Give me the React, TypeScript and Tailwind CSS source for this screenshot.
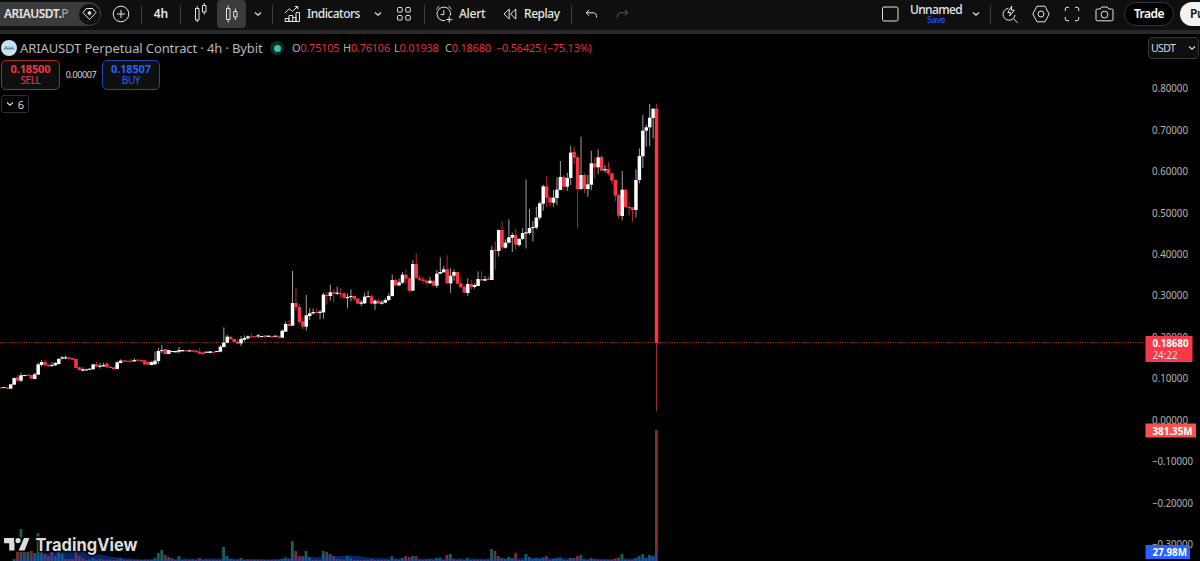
import React from "react";

type Segment = { x: number; y: number; data: string };

const STEP = 3.435;

// Each candle: direction, body top, body bottom, wick top, wick bottom (thirds of a pixel from the segment origin)
const segments: Segment[] = [
  {
    x: 0.4,
    y: 340,
    data: "R142,145 W141,144 R142,146 W133,146 W114,134 R112,122,104,124 W106,122,98,126 W105,108 R104,108 R105,116 W103,117,98,118 W73,104,68,104 W66,75,60,80 R66,76,60,80 R74,79 W75,78,66,80 W69,76,66,78 W57,72,54,74 W52,56,48,58 W52,55,46,58 R52,56,50,60 R54,59 R57,84 R82,90,80,92 W88,92,82,94 W88,91 W86,89 W73,88 R73,80,65,80 W77,80,68,86 W75,79,68,80 R70,82,68,84 R80,84 R82,88 W67,87,64,88 W62,69,58,70 R61,65 R62,64 R62,65,58,68 W60,64,54,66 R59,62 R60,62,58,66 R61,73 R66,74 W66,75,64,76 W62,73,35,75 W33,63,24,72 W30,33,15,40 R27,42 W30,42 W33,36 W33,37 W30,35,20,40 W30,34 R31,34 W31,34 R31,35 R32,37 R35,41,24,44 R37,42,34,47 W35,38",
  },
  {
    x: 210.1,
    y: 260,
    data: "W274,279 R275,278 W273,275 W260,275,255,277 W248,261,202,262 W230,248,224,250 R230,238 R237,246 R245,251,238,252 W237,250,228,258 W234,239,226,244 W229,235,226,238 R229,231,220,232 R228,231 W226,229,222,234 W228,230 R226,232 W227,231 R228,232 W227,230 R229,232,226,236 W212,233,208,234 W192,215,184,216 R192,198,180,198 W129,197,32,198 R129,142,84,152 R141,186,132,192 R184,200,170,208 W166,200,105,212 W160,168,145,180 W156,160,146,164 R156,159,146,160 W155,159,150,178 W104,157,98,176 R104,108,96,134 W97,108,74,122 R97,101,88,126 W98,101,80,104 R100,102,84,115 R100,113,96,118 W111,114,100,144 W108,111,88,124 R108,117,106,122 R116,131,114,132 W127,131,120,138 W110,130,98,132 W108,111,92,112 R109,131,105,133 W122,131,118,150 R122,131,116,131",
  },
  {
    x: 381.9,
    y: 210,
    data: "W277,281,270,284 W270,278,264,280 W258,270,250,274 W210,258,194,260 R210,226,206,228 W217,226,206,228 W194,218,186,222 R194,206,178,222 R205,242,202,248 W162,242,150,243 R162,204,130,206 R204,209,196,214 R208,213,200,222 R212,218,208,224 W212,220,200,220 R212,227,212,230 W191,227,180,234 W186,191,142,192 W178,187,168,188 R178,220,136,222 W197,220,175,248 W186,197,178,212 R186,221,186,224 R220,232,200,234 R231,248,225,248 W222,249,205,258 R222,231,210,240 W225,231,220,236 W207,228,184,228 R207,211,184,213 W207,212,198,214 R206,210,198,210 W120,210,108,210 R119,123,94,178 W60,123,58,140",
  },
  {
    x: 502,
    y: 90,
    data: "R420,472,393,480 W458,473,448,476 W442,458,388,460 W435,443,428,486 R435,464,415,480 W447,465,444,470 W429,447,415,450 W427,430,268,475 W414,429,357,435 W411,414,393,455 W383,413,350,418 W340,383,335,390 W289,341,284,362 R289,324,258,352 R323,338,320,350 W323,338,300,350 W299,324,262,345 W261,300,213,300 R261,290,255,302 W264,290,248,303 W188,264,168,285 R186,203,170,222 R202,297,195,415 W255,297,140,300 R255,296,250,310 W283,297,255,320 W220,284,182,300 R220,232,202,266 W202,232,178,252 R201,242,196,243 W237,241,225,248 R237,251,215,256 R250,272,248,284 R270,317,270,333 R315,377,312,387 W299,378,243,391 R299,352 R351,353,335,377 R352,360,352,396 W270,360,238,383 W198,270,175,280 W122,199,75,234 W112,122,104,170 W83,112,42,168 W56,84,56,145 R56,759,42,964",
  },
];

const candles = segments.flatMap((s) =>
  s.data.split(" ").map((c, i) => {
    const v = c.slice(1).split(",").map(Number);
    return {
      up: c[0] === "W",
      x: s.x + i * STEP,
      top: s.y + v[0] / 3,
      bottom: s.y + v[1] / 3,
      high: s.y + (v[2] ?? v[0]) / 3,
      low: s.y + (v[3] ?? v[1]) / 3,
    };
  })
);

// Volume bar heights in pixels, keyed by bar index counted from the last candle
const volumes: Record<number, [string, number]> = {};
const addVolumes = (list: string) =>
  list.split(" ").forEach((e) => {
    const [x, h] = e.slice(1).split(",").map(Number);
    volumes[Math.round((656.4 - x) / STEP)] = [e[0], h];
  });
addVolumes(
  "G14,2 R17.5,9 G21,32 R24.5,9 G28,9 R31,10 G34.5,8 G38,28 G41,10 R45,7 R48,5 R51.5,9 G55,5 G58.5,9 G62,7 R65.5,2 R69,2 R72,2 R75.5,9 R79,5 R82,3 G92,3 G99,2 G120,3 G154,3 G157.5,8 G161.5,11 R165,6 G168,4 R171.5,3 G178.5,5 R199,3 G223.5,14 G227,5 R230,2"
);
addVolumes(
  "G240,3 G282,2 G285.5,3.5 R289,2 G292.3,20 R295.7,10 R299,5 R302.5,5 G306,10 G309.5,4 G323,10 R326.7,9 G330,7 R333.5,5 G337,2 R340,2 G347,5 G350,3 R371,2 G391.5,5 R395,2 G402,3 R405.7,5 R409,4 G412.5,5 R416,5 G429,2 G436,3 G440,3.5 R447,6 G450,7 R454,2 G467,3 G491.5,12 R495,10 G498,5 R502,3 G505,2 G508.5,4 G512,3 R515,8 G526,7 G529.5,4 G533,2 G536,3 G539.5,2 G543,3.5 R546,5 G553,2 G557,3 G560.5,3.5 G570.5,3 R574,3 R577.5,5 G580.5,6 G591,3 R595,2 R615,2.5 R618.5,3.5 G621.8,7 G635.8,3 G639.5,5 G643,7 G646,3 G649.5,6 G653,5 R656.4,131"
);
const volumeBars = Array.from({ length: 188 }, (_, i) => {
  const [color, h] = volumes[i] ?? [i % 3 ? "R" : "G", 1 + (i % 2) * 0.4];
  return { x: 656.4 - i * STEP, color, h };
});

const axis = ["0.80000", "0.70000", "0.60000", "0.50000", "0.40000", "0.30000", "0.20000", "0.10000", "0.00000", "−0.10000", "−0.20000", "−0.30000"];

function Chart() {
  return (
    <svg className="block h-[527px] w-[1200px]" viewBox="0 34 1200 527" fontFamily='"Noto Sans", sans-serif' fontSize="11">
      {volumeBars.map((b, i) => (
        <rect key={i} x={b.x - 1.4} y={561 - b.h} width="2.8" height={b.h} fill={b.color === "G" ? "#13635a" : "#842c2b"} />
      ))}
      <path
        d="M14 561L22 558L32 557L42 554L55 552L70 551.5L88 552.5L102 555L118 557.5L140 559.5L175 558.5L230 558.5L270 559.5L310 557L330 556.5L350 555.5L360 556L368 557.7L395 558.5L510 558.5L540 557.5L575 558.5L620 559L645 558L653 557L657 551V561Z"
        fill="#1545c8"
        fillOpacity="0.5"
      />
      <path d="M0 342.5H1145" stroke="#f23645" strokeOpacity="0.75" strokeWidth="1" strokeDasharray="1 1.4" />
      {candles.map((c, i) => (
        <g key={i}>
          <rect x={c.x - 0.5} y={c.high} width="1" height={c.low - c.high} fill={c.up ? "#a0a0a0" : "#b02834"} />
          <rect x={c.x - 1.75} y={c.top} width="3.5" height={Math.max(1.1, c.bottom - c.top)} fill={c.up ? "#ffffff" : "#fb3545"} />
        </g>
      ))}
      {axis.map((t, i) => (
        <text key={t} x="1152" y={92.3 + i * 41.42} fill="#b4b4b8" textLength={t.length === 7 ? 36 : 41} lengthAdjust="spacingAndGlyphs">
          {t}
        </text>
      ))}
      <rect x="1145.5" y="336" width="47" height="26" fill="#f7394a" />
      <g fill="#ffffff">
        <text x="1152.5" y="346.8" fontWeight="700" textLength="36" lengthAdjust="spacingAndGlyphs">0.18680</text>
        <text x="1152.5" y="358.8" fillOpacity="0.85" textLength="25" lengthAdjust="spacingAndGlyphs">24:22</text>
      </g>
      <rect x="1145.5" y="423.5" width="50.5" height="14" fill="#f7524f" />
      <text x="1152.5" y="434.5" fill="#fff" fontWeight="700" textLength="40" lengthAdjust="spacingAndGlyphs">381.35M</text>
      <rect x="1145.5" y="545" width="44.5" height="14" fill="#2962ff" />
      <text x="1152.5" y="556" fill="#fff" fontWeight="700" textLength="34.5" lengthAdjust="spacingAndGlyphs">27.98M</text>
      <g fill="#dcdcdc" stroke="#000" strokeWidth="3" strokeLinejoin="round" paintOrder="stroke">
        <path d="M4 538H14.5V550.5H9.2V543.2H4Z" />
        <path d="M24 538H29.5L24.6 550.5H18.6Z" />
        <circle cx="18" cy="540.6" r="2.6" />
        <text x="35.5" y="550.5" fontFamily='"Inter", sans-serif' fontSize="17.5" fontWeight="700" textLength="102" lengthAdjust="spacingAndGlyphs">TradingView</text>
      </g>
    </svg>
  );
}

function Icon({ w = 18, h = 18, className = "", children }: { w?: number; h?: number; className?: string; children: React.ReactNode }) {
  return (
    <svg width={w} height={h} viewBox={`0 0 ${w} ${h}`} className={`shrink-0 ${className}`} fill="none" stroke="currentColor" strokeWidth="1">
      {children}
    </svg>
  );
}

const Chevron = () => (
  <Icon w={8} h={6}>
    <path d="M1 1.5L4 4.2L7 1.5" strokeWidth="1.1" />
  </Icon>
);

const Divider = () => <div className="h-[19px] w-px shrink-0 bg-[#3c3c3c]" />;

function Slot({ className, children }: { className: string; children: React.ReactNode }) {
  return <div className={`flex h-7 shrink-0 items-center justify-center ${className}`}>{children}</div>;
}

function Toolbar() {
  return (
    <header className="flex h-[34px] items-start overflow-hidden border-b-4 border-[#292929] bg-[#0f0f0f] text-[12px] leading-none font-medium whitespace-nowrap text-[#e6e6e6]">
      <div className="flex h-7 shrink-0 items-center">
        <div className="flex h-6 w-[101px] items-center justify-between rounded-r-full bg-[#3b3b3b] pr-px pl-1">
          <span className="text-[12px] font-semibold tracking-[-0.5px]">
            ARIAUSDT.<span className="font-normal text-[#b0b0b0]">P</span>
          </span>
          <span className="flex size-[21px] items-center justify-center rounded-full bg-[#0f0f0f]">
            <Icon w={15} h={14}>
              <path d="M4.2 1.5H10.8L14 5.6L7.5 12.5L1 5.6Z" />
              <path d="M7.5 3.7L9.7 6L7.5 8.5L5.3 6Z" fill="currentColor" stroke="none" />
            </Icon>
          </span>
        </div>
        <Slot className="w-10">
          <Icon>
            <circle cx="9" cy="9" r="7.8" />
            <path d="M9 5V13M5 9H13" />
          </Icon>
        </Slot>
        <Divider />
        <Slot className="w-[38px] font-semibold">4h</Slot>
        <Divider />
        <Slot className="w-9 pb-[4px] pl-[3px]">
          <Icon w={14} h={20}>
            <path d="M1.5 6.5H5V18H1.5ZM3.2 4V6.5M3.2 18V20M8.5 3.5H12V10H8.5ZM10.2 1V3.5M10.2 10V12.5" />
          </Icon>
        </Slot>
        <div className="flex h-7 w-[29px] shrink-0 items-center justify-center rounded-[4px] bg-[#3b3b3b]">
          <Icon w={14} h={20}>
            <path d="M1.5 4.5H5V15.5H1.5ZM3.2 1.5V4.5M3.2 15.5V18.5M8.7 7.5H12V13H8.7ZM10.4 4.5V7.5M10.4 13V16" />
          </Icon>
        </div>
        <Slot className="w-[26px] pr-[3px]"><Chevron /></Slot>
        <Divider />
        <Slot className="w-[34px] justify-end pr-[6px]">
          <Icon w={17} h={18}>
            <path d="M.8 8.2L5.2 3.8L8.5 6.5L13.5 1.5M10.8 1.5H13.8V4.3" />
            <path d="M1.2 16.5V13.5H5V16.5M5 16.5V10.5H8.7V16.5M8.7 12.5H12V16.5M12 16.5V7.5H15.5V16.5M.8 16.5H15.5" />
          </Icon>
        </Slot>
        <span className="w-[67px] text-[12px] tracking-[-0.52px]">Indicators</span>
        <Chevron />
        <Slot className="w-[42px] pl-[2px]">
          <Icon w={16} h={16}>
            <rect x="1.5" y="1.5" width="4.6" height="4.6" rx="1" />
            <rect x="9.7" y="1.5" width="4.6" height="4.6" rx="1" />
            <rect x="1.5" y="9.5" width="4.6" height="4.6" rx="1" />
            <rect x="9.7" y="9.5" width="4.6" height="4.6" rx="1" />
          </Icon>
        </Slot>
        <Divider />
        <Slot className="w-[34px] pl-[4px]">
          <Icon w={19} h={19}>
            <path d="M15.4 10.5A6.8 6.8 0 1 0 10 15.6M8.8 5.2V9.6H5.6M1.3 4L4.3 1.3M13.5 1.3L16.5 4M14.2 11.5V17.7M11 14.6H17.4" />
          </Icon>
        </Slot>
        <span className="w-[44px] tracking-[-0.25px]">Alert</span>
        <Slot className="w-[21px] justify-start">
          <Icon w={14} h={12}>
            <path d="M6.2 1V11L1 6ZM12.8 1V11L7.6 6Z" />
          </Icon>
        </Slot>
        <span className="w-[47px] tracking-[-0.45px]">Replay</span>
        <Divider />
        <Slot className="w-[38px]">
          <Icon w={13} h={10}>
            <path d="M4 1L1.2 3.8L4 6.6M1.2 3.8H8.3Q11.7 4 11.7 8.5" />
          </Icon>
        </Slot>
        <Slot className="w-6 text-[#606060]">
          <Icon w={13} h={10}>
            <path d="M9 1L11.8 3.8L9 6.6M11.8 3.8H4.7Q1.3 4 1.3 8.5" />
          </Icon>
        </Slot>
      </div>
      <div className="ml-auto flex h-7 w-[319px] shrink-0 items-center">
        <Icon w={18} h={16}>
          <rect x="1.5" y="1" width="15.5" height="14" rx="1.5" />
        </Icon>
        <div className="ml-3 flex w-[50px] flex-col items-center">
          <span className="text-[12px] leading-[12px] tracking-[-0.6px]">Unnamed</span>
          <span className="text-[9px] leading-[8px] font-normal tracking-[-0.4px] text-[#2962ff]">Save</span>
        </div>
        <Slot className="w-[29px]"><Chevron /></Slot>
        <Divider />
        <Slot className="w-[34px] pl-[3px]">
          <Icon w={18} h={19}>
            <path d="M7.4 3.3A6 6 0 1 0 14 10M12.2 13.3L16.5 17.7M10.8 1L6.8 7.5H9.6L8.6 11L13.4 5.2H10.4Z" />
          </Icon>
        </Slot>
        <Slot className="w-[31px]">
          <Icon>
            <path d="M5 1.2H13L17.2 9L13 16.8H5L.8 9Z" />
            <circle cx="9" cy="9" r="3" />
          </Icon>
        </Slot>
        <Slot className="w-8">
          <Icon w={16} h={16}>
            <path d="M1.3 5V3Q1.3 1.3 3 1.3H5M11 1.3H13Q14.7 1.3 14.7 3V5M14.7 11V13Q14.7 14.7 13 14.7H11M5 14.7H3Q1.3 14.7 1.3 13V11" />
          </Icon>
        </Slot>
        <Slot className="w-8">
          <Icon w={19} h={16}>
            <path d="M2.3 3H5.2L6.8 1H12.2L13.8 3H16.7Q18 3 18 4.3V13.5Q18 14.8 16.7 14.8H2.3Q1 14.8 1 13.5V4.3Q1 3 2.3 3Z" />
            <circle cx="9.5" cy="8.6" r="3.4" />
          </Icon>
        </Slot>
        <button className="ml-1 flex h-6 w-[50px] shrink-0 items-center justify-center rounded-full border border-[#363636] bg-black text-[12px] font-semibold tracking-[-0.5px] text-white">Trade</button>
        <div className="ml-[6px] flex h-6 w-16 shrink-0 items-center rounded-full bg-[#f2f2f2] pl-[10px] font-semibold tracking-[-0.3px] text-[#0f0f0f]">Publish</div>
      </div>
    </header>
  );
}

const ohlc = [
  ["O", "0.75105"],
  ["H", "0.76106"],
  ["L", "0.01938"],
  ["C", "0.18680"],
];

function Legend() {
  return (
    <div className="absolute top-0 left-0 flex flex-col items-start whitespace-nowrap">
      <div className="mt-[5px] flex h-[18px] items-center leading-none">
        <span className="ml-[1px] flex size-4 items-center justify-center rounded-full bg-[#c9e4ef]">
          <Icon w={12} h={8} className="text-[#55789c]">
            <path d="M.8 6L3 2L4.3 6M5 6V3M7 2V6M8 6L9.5 2.5L11 6M1 4.5H11" strokeWidth=".7" />
          </Icon>
        </span>
        <span className="ml-[3px] w-[243px] text-[13px] tracking-[-0.12px] text-[#b8b8bc]">ARIAUSDT Perpetual Contract · 4h · Bybit</span>
        <span className="ml-[7px] flex size-[14px] items-center justify-center rounded-full bg-[#0b2d29]">
          <span className="size-[7px] rounded-full bg-[#42bda8]" />
        </span>
        <span className="ml-[8px] flex pb-[2px] text-[11px] tracking-[-0.24px] text-[#e12f3e]">
          {ohlc.map(([k, v]) => (
            <span key={k} className="w-[51px]">
              <span className="text-[#b0b0b4]">{k}</span>
              {v}
            </span>
          ))}
          <span>−0.56425 (−75.13%)</span>
        </span>
      </div>
      <div className="mt-[3px] ml-px flex items-center">
        <div className="flex h-[30px] w-[59px] flex-col items-center justify-center rounded-[5px] border border-[#a52834] bg-[#0f0f0f] pb-px text-[#f23645]">
          <span className="text-[11px] leading-[12px] font-bold tracking-[-0.15px]">0.18500</span>
          <span className="text-[10px] leading-[11px] tracking-[-0.4px]">SELL</span>
        </div>
        <span className="w-[42px] text-center text-[9px] tracking-[-0.4px] text-[#dbdbdb]">0.00007</span>
        <div className="flex h-[30px] w-[58px] flex-col items-center justify-center rounded-[5px] border border-[#2148b5] bg-[#0f0f0f] pb-px text-[#2962ff]">
          <span className="text-[11px] leading-[12px] font-bold tracking-[-0.15px]">0.18507</span>
          <span className="text-[10px] leading-[11px] tracking-[-0.4px]">BUY</span>
        </div>
      </div>
      <div className="mt-[5px] ml-px flex h-[18px] w-[28px] items-center justify-center gap-1 rounded-[3px] border border-[#303030] text-[11px] leading-none text-[#dbdbdb]">
        <Chevron />
        <span>6</span>
      </div>
    </div>
  );
}

export default function App() {
  return (
    <div className="h-[561px] w-[1200px] overflow-hidden bg-black font-['Noto_Sans',sans-serif]">
      <Toolbar />
      <main className="relative">
        <Chart />
        <Legend />
        <div className="absolute top-[3px] right-[1px] flex h-[22px] w-[51px] items-center justify-between rounded-[4px] border border-[#363636] bg-[#0f0f0f] px-[2px] text-[10.5px] leading-none tracking-[-0.6px] text-[#dbdbdb]">
          USDT
          <Chevron />
        </div>
      </main>
    </div>
  );
}
